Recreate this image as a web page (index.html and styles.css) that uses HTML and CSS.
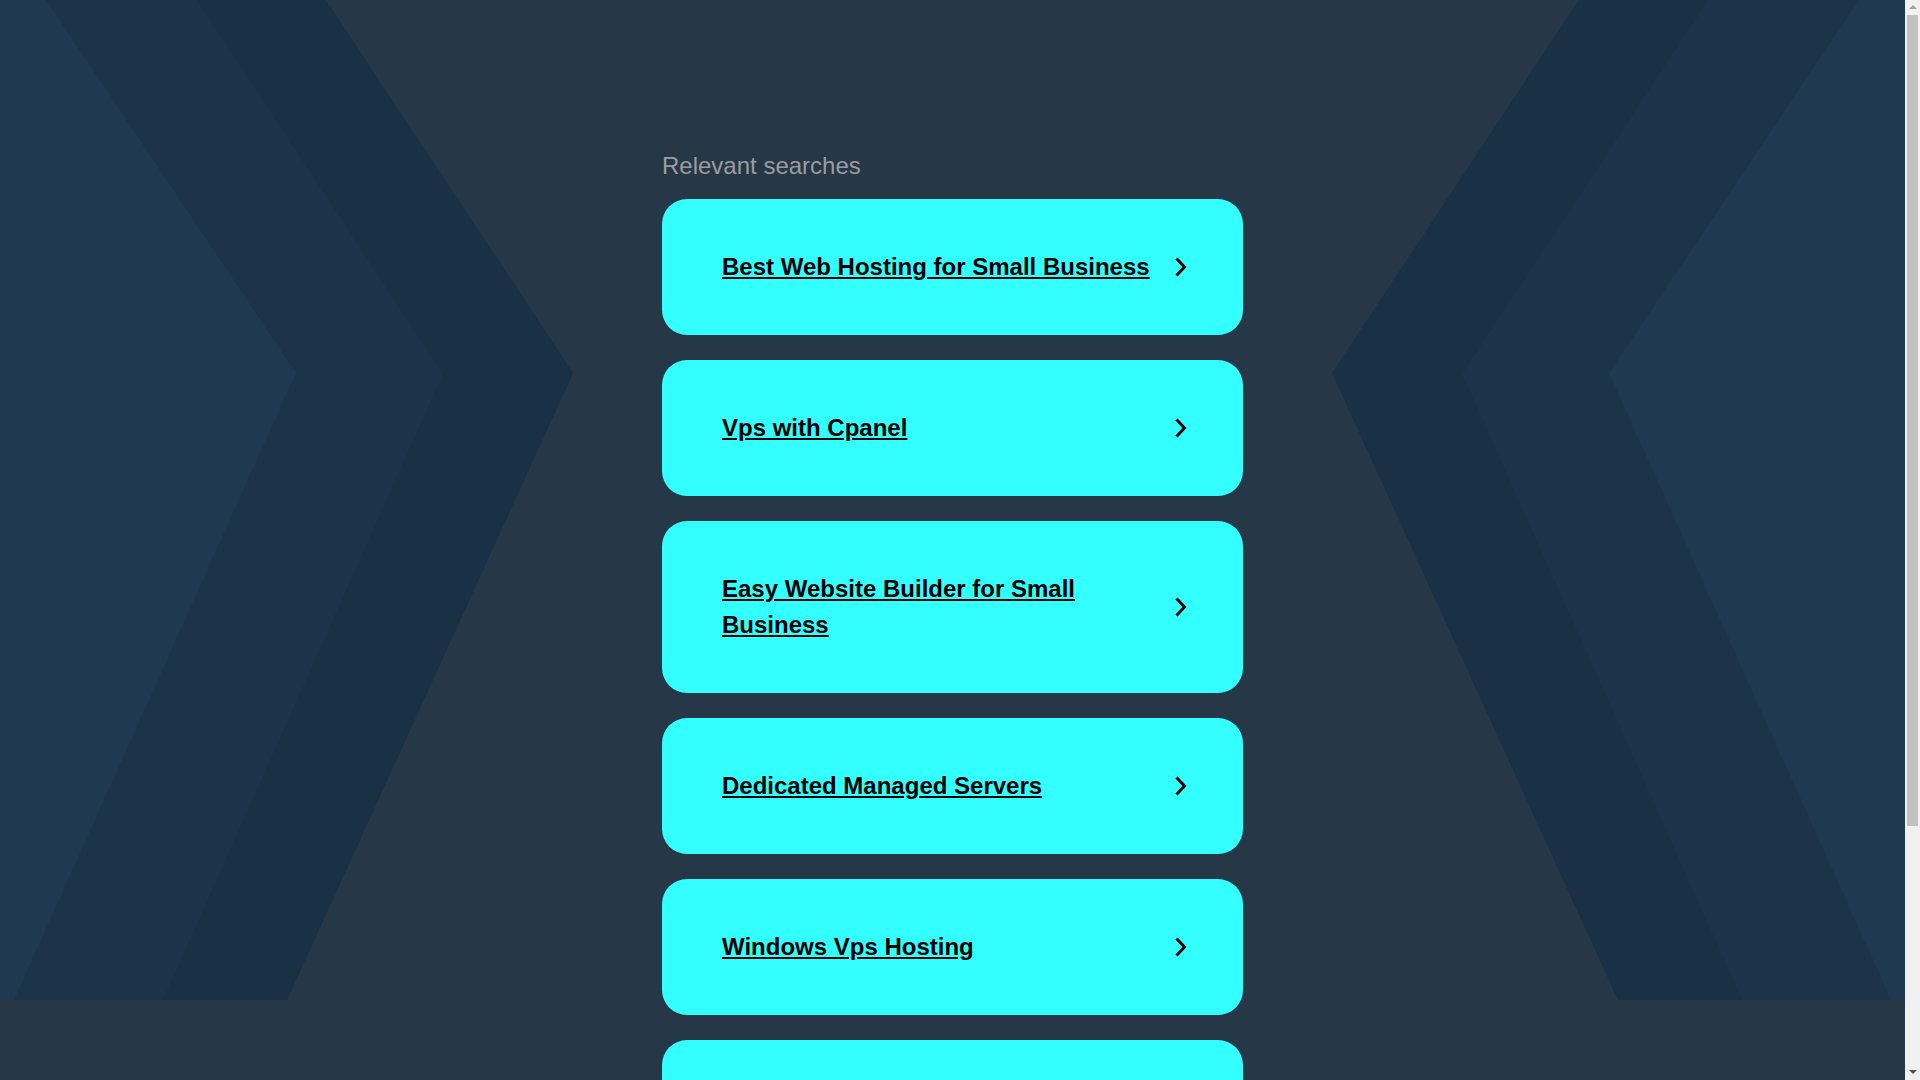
FILE: index.html
```html
<!DOCTYPE html>
<html lang="en">
<head>
<meta charset="utf-8">
<title>Relevant searches</title>
<link rel="stylesheet" href="styles.css">
</head>
<body>
<div class="bg" aria-hidden="true">
  <svg class="bg-svg" viewBox="0 0 1905 1000" preserveAspectRatio="none" xmlns="http://www.w3.org/2000/svg">
    <polygon fill="#1a3045" points="0,0 326,0 573,373 287,1000 0,1000"/>
    <polygon fill="#1c3349" points="0,0 197,0 443,374 163,1000 0,1000"/>
    <polygon fill="#1f3a50" points="0,0 46,0 296,373 14,1000 0,1000"/>
    <polygon fill="#1a3045" points="1905,0 1579,0 1332,373 1618,1000 1905,1000"/>
    <polygon fill="#1c3349" points="1905,0 1708,0 1462,374 1742,1000 1905,1000"/>
    <polygon fill="#1f3a50" points="1905,0 1859,0 1609,373 1891,1000 1905,1000"/>
  </svg>
</div>
<main class="wrap">
  <h2 class="heading">Relevant searches</h2>
  <ul class="list">
    <li class="card"><a class="card-link" href="#">Best Web Hosting for Small Business</a><svg class="chev" viewBox="0 0 12 20" xmlns="http://www.w3.org/2000/svg"><polyline points="1.5,1.5 9.5,10 1.5,18.5"/></svg></li>
    <li class="card"><a class="card-link" href="#">Vps with Cpanel</a><svg class="chev" viewBox="0 0 12 20" xmlns="http://www.w3.org/2000/svg"><polyline points="1.5,1.5 9.5,10 1.5,18.5"/></svg></li>
    <li class="card"><a class="card-link" href="#">Easy Website Builder for Small Business</a><svg class="chev" viewBox="0 0 12 20" xmlns="http://www.w3.org/2000/svg"><polyline points="1.5,1.5 9.5,10 1.5,18.5"/></svg></li>
    <li class="card"><a class="card-link" href="#">Dedicated Managed Servers</a><svg class="chev" viewBox="0 0 12 20" xmlns="http://www.w3.org/2000/svg"><polyline points="1.5,1.5 9.5,10 1.5,18.5"/></svg></li>
    <li class="card"><a class="card-link" href="#">Windows Vps Hosting</a><svg class="chev" viewBox="0 0 12 20" xmlns="http://www.w3.org/2000/svg"><polyline points="1.5,1.5 9.5,10 1.5,18.5"/></svg></li>
    <li class="card"><a class="card-link" href="#">Cheap Domain Registration</a><svg class="chev" viewBox="0 0 12 20" xmlns="http://www.w3.org/2000/svg"><polyline points="1.5,1.5 9.5,10 1.5,18.5"/></svg></li>
  </ul>
</main>
<div class="scrollbar" aria-hidden="true">
  <div class="sb-up"></div>
  <div class="sb-thumb"></div>
  <div class="sb-down"></div>
</div>
</body>
</html>
```
FILE: styles.css
```css
html, body {
  margin: 0;
  padding: 0;
}

body {
  background: #263747;
  font-family: "Liberation Sans", Arial, sans-serif;
  min-height: 1400px;
  margin-right: 15px;
}

.bg {
  position: absolute;
  top: 0;
  left: 0;
  right: 15px;
  height: 1000px;
  overflow: hidden;
}

.bg-svg {
  display: block;
  width: 100%;
  height: 1000px;
}

.wrap {
  position: relative;
  width: 581px;
  margin: 0 auto;
  padding: 148px 0 200px;
}

.heading {
  margin: 0 0 15px;
  font-size: 24px;
  line-height: 36px;
  font-weight: normal;
  color: #9a9c9f;
}

.list {
  list-style: none;
  margin: 0;
  padding: 0;
  display: flex;
  flex-direction: column;
  gap: 25px;
}

.card {
  display: flex;
  align-items: center;
  gap: 21px;
  background: #33ffff;
  border-radius: 25px;
  padding: 50px 56px 50px 60px;
}

.card-link {
  flex: 1;
  color: #000;
  font-size: 24px;
  line-height: 36px;
  font-weight: bold;
  text-decoration: underline;
}

.chev {
  flex: none;
  width: 12px;
  height: 20px;
  fill: none;
  stroke: #000;
  stroke-width: 3;
}

/* classic browser scrollbar overlay */
.scrollbar {
  position: fixed;
  top: 0;
  right: 0;
  width: 15px;
  height: 100vh;
  background: #f1f1f1;
  display: flex;
  flex-direction: column;
  align-items: center;
}

.sb-up,
.sb-down {
  width: 0;
  height: 0;
  border-left: 4px solid transparent;
  border-right: 4px solid transparent;
  flex: none;
}

.sb-up {
  margin-top: 5px;
  border-bottom: 4px solid #a3a3a3;
}

.sb-thumb {
  flex: none;
  width: 11px;
  height: 811px;
  margin-top: 6px;
  background: #c1c1c1;
}

.sb-down {
  margin-top: auto;
  margin-bottom: 6px;
  border-top: 4px solid #505050;
}
```
